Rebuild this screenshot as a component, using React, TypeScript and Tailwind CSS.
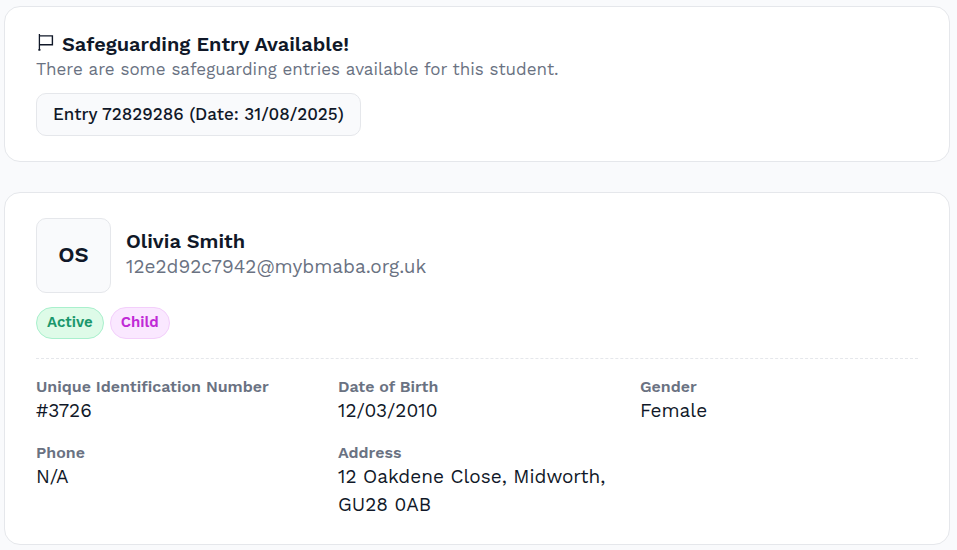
import type { ReactNode } from "react";

function Card({ children }: { children: ReactNode }) {
  return (
    <section className="rounded-2xl border border-gray-200 bg-white px-[31px] py-[25px]">
      {children}
    </section>
  );
}

function FlagIcon() {
  return (
    <svg className="size-5" viewBox="0 0 20 20" fill="none" stroke="currentColor" aria-hidden="true">
      <path d="M3.4 0V16.5" strokeWidth="1.3" />
      <path d="M2.2 15.9H4.6" strokeWidth="1.2" />
      <path d="M3.4 1.9H16.4V10.8H3.4" strokeWidth="1.4" />
    </svg>
  );
}

const details = [
  { label: "Unique Identification Number", value: "#3726" },
  { label: "Date of Birth", value: "12/03/2010" },
  { label: "Gender", value: "Female" },
  { label: "Phone", value: "N/A" },
  { label: "Address", value: "12 Oakdene Close, Midworth, GU28 0AB" },
];

export default function App() {
  return (
    <main className="flex min-h-screen flex-col gap-[30px] bg-[#f9fafc] pt-[6px] pr-[7px] pb-[5px] pl-1 font-['Work_Sans',Inter,sans-serif] text-gray-900">
      <Card>
        <h2 className="flex items-center gap-[6px] text-[20px] leading-6 font-semibold">
          <FlagIcon />
          Safeguarding Entry Available!
        </h2>
        <p className="text-[17px] leading-[26px] text-gray-500">
          There are some safeguarding entries available for this student.
        </p>
        <button
          type="button"
          className="mt-[11px] h-[43px] rounded-[10px] border border-gray-200 bg-[#f9fafc] px-4 text-[17px] font-medium"
        >
          Entry 72829286 (Date: 31/08/2025)
        </button>
      </Card>

      <Card>
        <div className="flex items-center gap-[15px]">
          <div className="flex size-[75px] items-center justify-center rounded-[10px] border border-gray-200 bg-[#f9fafc] pb-[2px] text-[22px] font-semibold">
            OS
          </div>
          <div className="pb-[3px]">
            <h2 className="text-[20px] leading-[26px] font-semibold">Olivia Smith</h2>
            <p className="text-[19px] leading-[26px] text-gray-500">12e2d92c7942@mybmaba.org.uk</p>
          </div>
        </div>
        <div className="mt-[14px] flex gap-[6px] text-[15px] font-semibold">
          <span className="flex h-8 items-center rounded-full border border-[#a9f0cd] bg-[#defbe8] px-[10px] pb-[2px] text-[#1a976c]">
            Active
          </span>
          <span className="flex h-8 items-center rounded-full border border-[#f3cffb] bg-[#fae8ff] px-[10px] pb-[2px] text-[#c02ad6]">
            Child
          </span>
        </div>
        <dl className="mt-[19px] grid grid-cols-3 gap-x-6 gap-y-[18px] border-t border-dashed border-gray-200 pt-[18px]">
          {details.map((item) => (
            <div key={item.label}>
              <dt className="text-[16px] leading-5 font-semibold text-gray-500">{item.label}</dt>
              <dd className="text-[19px] leading-7">{item.value}</dd>
            </div>
          ))}
        </dl>
      </Card>
    </main>
  );
}
